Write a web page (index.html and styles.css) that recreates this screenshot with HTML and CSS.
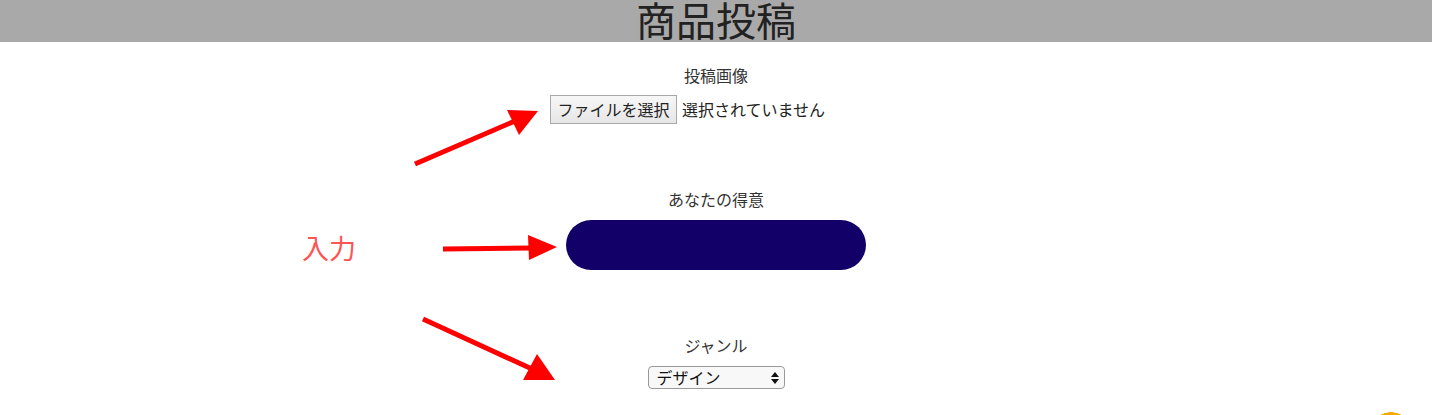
FILE: index.html
```html
<!DOCTYPE html>
<html lang="ja">
<head>
<meta charset="utf-8">
<title>商品投稿</title>
<link rel="stylesheet" href="styles.css">
</head>
<body>
<header class="top">
  <h1 class="title">商品投稿</h1>
</header>
<main class="form">
  <section class="field">
    <div class="label">投稿画像</div>
    <div class="file-row">
      <span class="file-btn">ファイルを選択</span>
      <span class="file-status">選択されていません</span>
    </div>
  </section>
  <section class="field">
    <div class="label">あなたの得意</div>
    <div class="pill"></div>
  </section>
  <section class="field">
    <div class="label">ジャンル</div>
    <div class="select">
      <span class="select-text">デザイン</span>
      <svg class="select-arrows" width="8" height="12" viewBox="0 0 8 12"><path d="M4 0 L8 5 L0 5 Z M0 7 L8 7 L4 12 Z" fill="#111"/></svg>
    </div>
  </section>
</main>
<div class="note">入力</div>
<svg class="arrows" width="1432" height="415" viewBox="0 0 1432 415">
  <g stroke="#ff0000" stroke-width="5" fill="none">
    <line x1="415" y1="164" x2="515" y2="121"/>
    <line x1="443" y1="249" x2="532" y2="248"/>
    <line x1="423" y1="319" x2="532" y2="369"/>
  </g>
  <g fill="#ff0000">
    <polygon points="538,111 507,110 519,135"/>
    <polygon points="557,247 528,235 529,260"/>
    <polygon points="555,380 523,380 537,354"/>
  </g>
</svg>
<div class="badge"></div>
</body>
</html>
```
FILE: styles.css
```css
html, body {
  margin: 0;
  padding: 0;
  background: #fff;
}
body {
  position: relative;
  width: 1432px;
  height: 415px;
  overflow: hidden;
  font-family: "Noto Sans CJK JP", "Noto Sans", sans-serif;
  color: #333;
}
.top {
  height: 42px;
  background: #a9a9a9;
}
.title {
  margin: 0;
  text-align: center;
  font-size: 40px;
  font-weight: 400;
  line-height: 38px;
  color: #222;
}
.form {
  display: flex;
  flex-direction: column;
  align-items: center;
  padding-top: 23px;
  gap: 65px;
}
.field {
  display: flex;
  flex-direction: column;
  align-items: center;
}
.label {
  font-size: 16px;
  line-height: 20px;
  height: 20px;
  color: #333;
}
.field .label + * {
  margin-top: 11px;
}
.field:first-child .label + * {
  margin-top: 10px;
}
.file-row {
  width: 332px;
  display: flex;
  align-items: center;
  gap: 5px;
  height: 29px;
}
.file-btn {
  box-sizing: border-box;
  width: 127px;
  height: 29px;
  border: 1px solid #a8a8a8;
  background: linear-gradient(#f7f7f7, #e6e6e6);
  font-size: 16px;
  line-height: 27px;
  text-align: center;
  color: #222;
}
.file-status {
  font-size: 16px;
  color: #222;
  line-height: 29px;
}
.pill {
  width: 300px;
  height: 50px;
  border-radius: 25px;
  background: #120068;
}
.select {
  box-sizing: border-box;
  width: 137px;
  height: 23px;
  border: 1px solid #9a9a9a;
  border-radius: 4px;
  background: #f8f8f8;
  display: flex;
  align-items: center;
  justify-content: space-between;
  padding: 0 5px 0 8px;
}
.select-text {
  font-size: 16px;
  line-height: 21px;
  color: #111;
}
.note {
  position: absolute;
  left: 302px;
  top: 229px;
  font-size: 27px;
  line-height: 38px;
  color: #ff5252;
}
.arrows {
  position: absolute;
  left: 0;
  top: 0;
  pointer-events: none;
}
.badge {
  position: absolute;
  left: 1369px;
  top: 412px;
  width: 44px;
  height: 3px;
  background: radial-gradient(circle at 22px 22px, #f7a900 21.5px, rgba(247,169,0,0) 22px);
}
```
